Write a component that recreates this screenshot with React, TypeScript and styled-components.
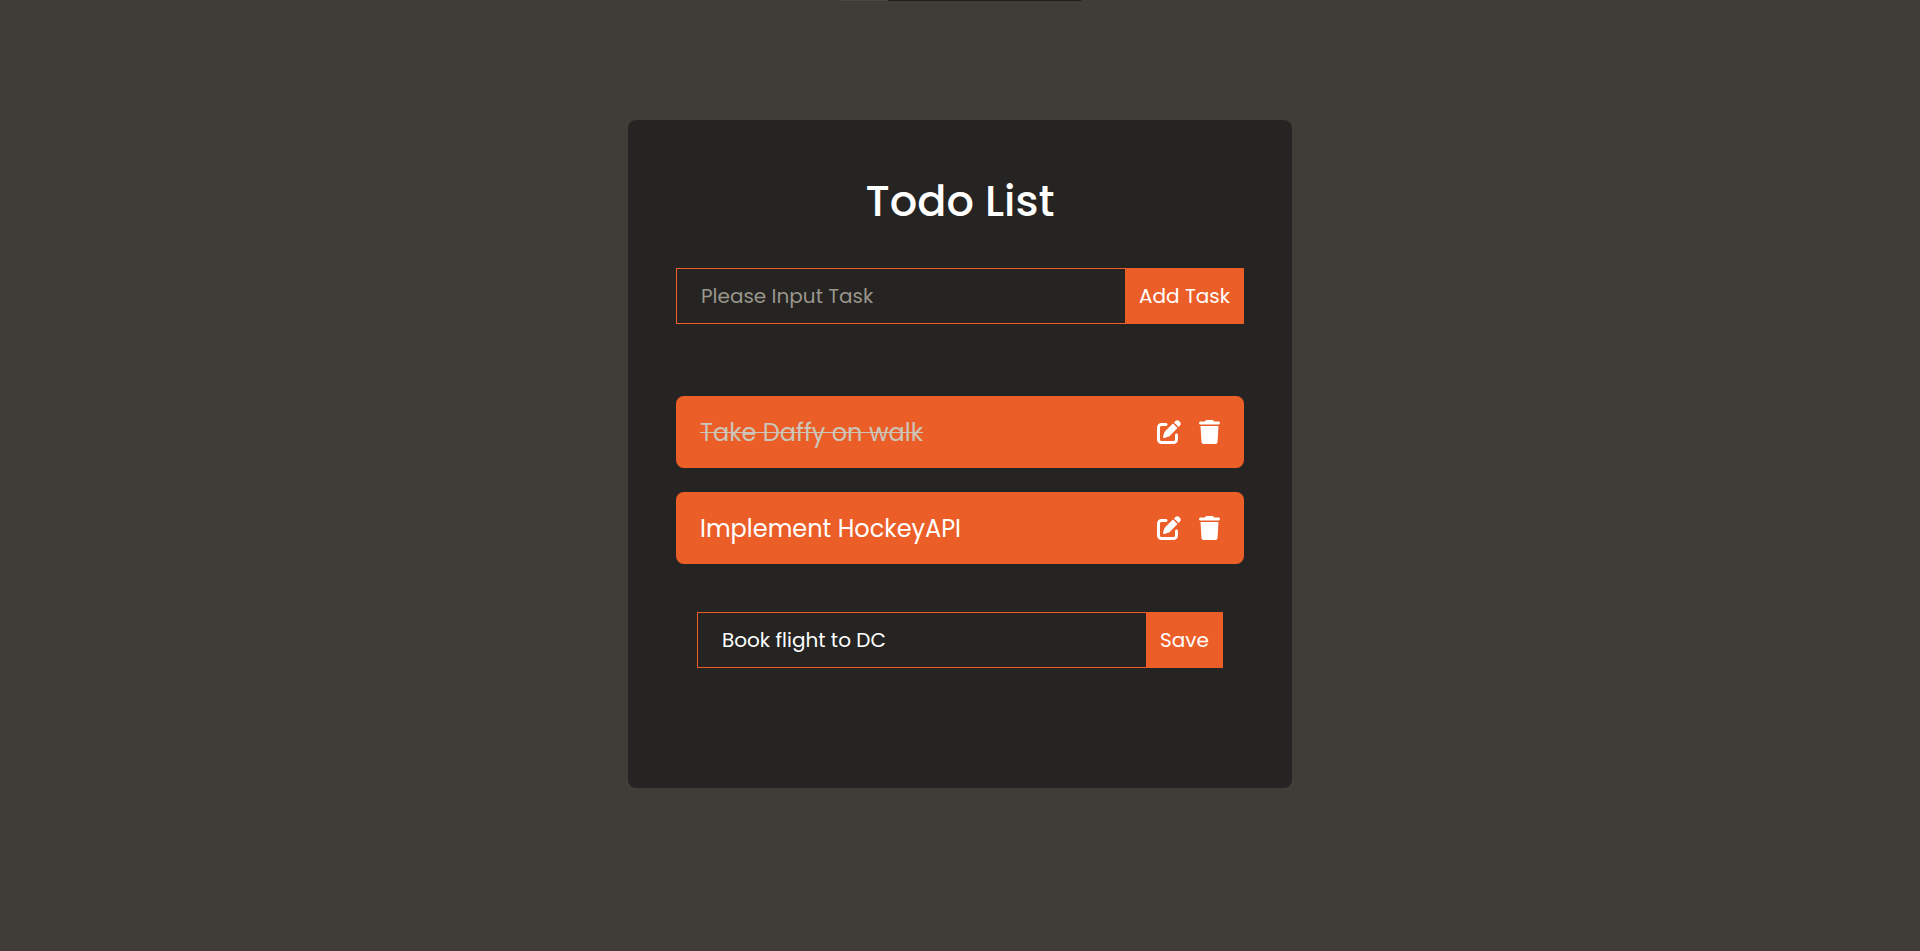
import React, { FormEvent, useState } from "react";
import styled, { createGlobalStyle } from "styled-components";

const colors = {
  page: "#403d39",
  card: "#252422",
  accent: "#eb5e28",
  muted: "#ccc5b9",
  placeholder: "#9a968c",
  text: "#ffffff",
};

const GlobalStyle = createGlobalStyle`
  *, *::before, *::after { box-sizing: border-box; }
  body {
    margin: 0;
    background: ${colors.page};
    color: ${colors.text};
    font-family: Poppins, Inter, "Open Sans", sans-serif;
  }
`;

const Page = styled.main`
  min-height: 100vh;
  padding: 120px 24px;
  display: flex;
  justify-content: center;
  align-items: flex-start;
`;

const TopTabs = styled.div`
  position: absolute;
  top: 0;
  left: 50%;
  width: 241px;
  height: 1px;
  margin-left: -120px;
  background: linear-gradient(to right, #4a4847 48px, #1f1e1d 48px);
`;

const Card = styled.section`
  width: 100%;
  max-width: 664px;
  padding: 48px 48px 120px;
  border-radius: 8px;
  background: ${colors.card};
`;

const Title = styled.h1`
  margin: 0 0 34px;
  font-size: 43px;
  line-height: 66px;
  font-weight: 500;
  text-align: center;
`;

const TaskForm = styled.form<{ $below: number }>`
  display: flex;
  justify-content: center;
  margin-bottom: ${({ $below }) => $below}px;
`;

const TaskInput = styled.input`
  flex: 0 1 449px;
  min-width: 0;
  height: 56px;
  padding: 0 24px;
  border: 1px solid ${colors.accent};
  border-right: 0;
  border-radius: 0;
  outline: none;
  background: transparent;
  color: ${colors.text};
  font: 400 20px/30px Poppins, Inter, "Open Sans", sans-serif;

  &::placeholder {
    color: ${colors.placeholder};
    opacity: 1;
  }
`;

const SubmitButton = styled.button<{ $width: number }>`
  flex: 0 0 ${({ $width }) => $width}px;
  height: 56px;
  padding: 0;
  border: 0;
  background: ${colors.accent};
  color: ${colors.text};
  font: 400 20px/30px Poppins, Inter, "Open Sans", sans-serif;
  white-space: nowrap;
  cursor: pointer;
`;

const TaskList = styled.ul`
  display: flex;
  flex-direction: column;
  gap: 24px;
  margin: 0 0 48px;
  padding: 0;
  list-style: none;
`;

const TaskRow = styled.li`
  display: flex;
  align-items: center;
  justify-content: space-between;
  min-height: 72px;
  padding: 0 24px;
  border-radius: 8px;
  background: ${colors.accent};
`;

const TaskName = styled.span<{ $done: boolean }>`
  padding-top: 2px;
  font-size: 24px;
  line-height: 36px;
  color: ${({ $done }) => ($done ? colors.muted : colors.text)};
  text-decoration: ${({ $done }) => ($done ? "line-through 1px" : "none")};
  cursor: pointer;
`;

const Actions = styled.div`
  display: flex;
  align-items: center;
  gap: 18px;
`;

const IconButton = styled.button`
  display: flex;
  padding: 0;
  border: 0;
  background: none;
  color: ${colors.text};
  cursor: pointer;
`;

const PenIcon = () => (
  <svg width="24" height="24" viewBox="0 0 512 512" fill="currentColor" aria-hidden="true">
    <path d="M471.6 21.7c-21.9-21.9-57.3-21.9-79.2 0L362.3 51.7l97.9 97.9 30.1-30.1c21.9-21.9 21.9-57.3 0-79.2L471.6 21.7zm-299.2 220c-6.1 6.1-10.8 13.6-13.5 21.9l-29.6 88.8c-2.9 8.6-.6 18.1 5.8 24.6s15.9 8.7 24.6 5.8l88.8-29.6c8.2-2.7 15.7-7.4 21.9-13.5L437.7 172.3 339.7 74.3 172.4 241.7zM96 64C43 64 0 107 0 160V416c0 53 43 96 96 96H352c53 0 96-43 96-96V320c0-17.7-14.3-32-32-32s-32 14.3-32 32v96c0 17.7-14.3 32-32 32H96c-17.7 0-32-14.3-32-32V160c0-17.7 14.3-32 32-32h96c17.7 0 32-14.3 32-32s-14.3-32-32-32H96z" />
  </svg>
);

const TrashIcon = () => (
  <svg width="21" height="24" viewBox="0 0 448 512" fill="currentColor" aria-hidden="true">
    <path d="M135.2 17.7L128 32H32C14.3 32 0 46.3 0 64S14.3 96 32 96H416c17.7 0 32-14.3 32-32s-14.3-32-32-32H320l-7.2-14.3C307.4 6.8 296.3 0 284.2 0H163.8c-12.1 0-23.2 6.8-28.6 17.7zM416 128H32L53.2 467c1.6 25.3 22.6 45 47.9 45H346.9c25.3 0 46.3-19.7 47.9-45L416 128z" />
  </svg>
);

type Task = { id: number; name: string; done: boolean };

const initialTasks: Task[] = [
  { id: 1, name: "Take Daffy on walk", done: true },
  { id: 2, name: "Implement HockeyAPI", done: false },
];

export default function App() {
  const [tasks, setTasks] = useState(initialTasks);
  const [draft, setDraft] = useState("");
  const [edited, setEdited] = useState("Book flight to DC");

  const append = (name: string) =>
    setTasks((list) => [...list, { id: Date.now(), name, done: false }]);

  const addTask = (event: FormEvent) => {
    event.preventDefault();
    if (!draft) return;
    append(draft);
    setDraft("");
  };

  const saveTask = (event: FormEvent) => {
    event.preventDefault();
    if (!edited) return;
    append(edited);
    setEdited("");
  };

  const toggle = (id: number) =>
    setTasks((list) => list.map((t) => (t.id === id ? { ...t, done: !t.done } : t)));

  const remove = (id: number) => setTasks((list) => list.filter((t) => t.id !== id));

  return (
    <>
      <GlobalStyle />
      <TopTabs />
      <Page>
        <Card>
          <Title>Todo List</Title>
          <TaskForm $below={72} onSubmit={addTask}>
            <TaskInput
              aria-label="New task"
              placeholder="Please Input Task"
              value={draft}
              onChange={(e) => setDraft(e.target.value)}
            />
            <SubmitButton $width={119} type="submit">Add Task</SubmitButton>
          </TaskForm>
          <TaskList>
            {tasks.map((task) => (
              <TaskRow key={task.id}>
                <TaskName $done={task.done} onClick={() => toggle(task.id)}>
                  {task.name}
                </TaskName>
                <Actions>
                  <IconButton type="button" aria-label={`Edit ${task.name}`}>
                    <PenIcon />
                  </IconButton>
                  <IconButton
                    type="button"
                    aria-label={`Delete ${task.name}`}
                    onClick={() => remove(task.id)}
                  >
                    <TrashIcon />
                  </IconButton>
                </Actions>
              </TaskRow>
            ))}
          </TaskList>
          <TaskForm $below={0} onSubmit={saveTask}>
            <TaskInput
              aria-label="Edit task"
              value={edited}
              onChange={(e) => setEdited(e.target.value)}
            />
            <SubmitButton $width={77} type="submit">Save</SubmitButton>
          </TaskForm>
        </Card>
      </Page>
    </>
  );
}
